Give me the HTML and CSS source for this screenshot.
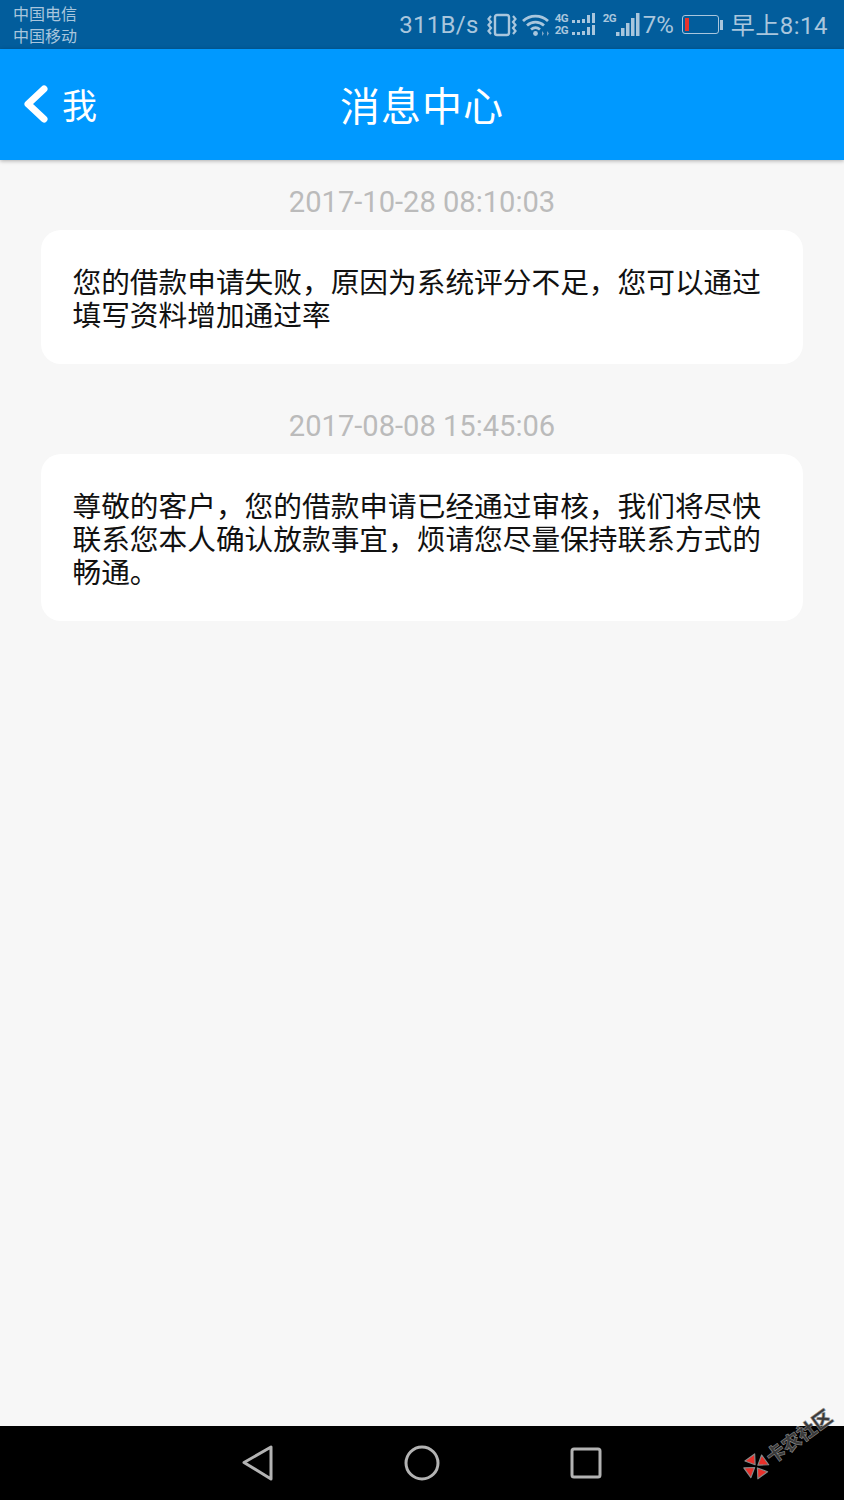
FILE: index.html
```html
<!DOCTYPE html>
<html lang="zh-CN">
<head>
  <meta charset="UTF-8" />
  <meta name="viewport" content="width=device-width, initial-scale=1.0"/>
  <title>消息中心</title>
  <link rel="stylesheet" href="styles.css">
</head>
<body>
  <div class="page">
    <div class="status-bar">
      <div class="carriers">
        <span>中国电信</span>
        <span>中国移动</span>
      </div>
      <div class="status-right">
        <span class="speed">311B/s</span>
        <svg class="ic-vibrate" width="30" height="24" viewBox="0 0 30 24" fill="none" stroke="#a9c6dd" stroke-width="2.200">
          <rect x="8" y="2" width="14" height="20" rx="2" stroke-width="2.400"/>
          <path d="M4 3L1.500 6 4 9l-2.500 3L4 15l-2.500 3L4 21M26 3l2.500 3L26 9l2.500 3-2.500 3 2.500 3-2.500 3"/>
        </svg>
        <svg class="ic-wifi" width="28" height="24" viewBox="0 0 28 24" fill="none" stroke="#a9c6dd" stroke-width="2.800">
          <path d="M1 8c7-6.500 18-6.500 25 0M5 12.500c5-4.500 12-4.500 17 0M9 16.500c3-2.500 6-2.500 9 0"/>
          <circle cx="13.500" cy="20.500" r="2.400" fill="#a9c6dd" stroke="none"/>
          <path d="M20 23v-5l2 2.500zM25 18v5l2-2.500z" fill="#7fa6c6" stroke="none"/>
        </svg>
        <div class="ic-dual">
          <div class="sim-row">
            <span class="sim-label">4G</span>
            <svg width="24" height="11" viewBox="0 0 24 11" fill="#a9c6dd"><rect x="0" y="7" width="3" height="3"/><rect x="5" y="7" width="3" height="3"/><rect x="10" y="6" width="3" height="4"/><rect x="15" y="2" width="3" height="8"/><rect x="20" y="0" width="3" height="10"/></svg>
          </div>
          <div class="sim-row">
            <span class="sim-label">2G</span>
            <svg width="24" height="11" viewBox="0 0 24 11" fill="#a9c6dd"><rect x="0" y="7" width="3" height="3"/><rect x="5" y="7" width="3" height="3"/><rect x="10" y="6" width="3" height="4"/><rect x="15" y="2" width="3" height="8"/><rect x="20" y="0" width="3" height="10"/></svg>
          </div>
        </div>
        <div class="ic-single">
          <span class="sim-label sim-top">2G</span>
          <svg width="24" height="24" viewBox="0 0 24 24" fill="#a9c6dd"><rect x="0" y="19" width="3.500" height="4"/><rect x="5" y="15" width="3.500" height="8"/><rect x="10" y="10" width="3.500" height="13"/><rect x="15" y="5" width="3.500" height="18"/><rect x="20" y="0" width="3.500" height="23"/></svg>
        </div>
        <span class="battery-pct">7%</span>
        <div class="battery">
          <div class="battery-body"><div class="battery-level"></div></div>
          <div class="battery-cap"></div>
        </div>
        <span class="clock">早上8:14</span>
      </div>
    </div>

    <header class="app-bar">
      <div class="back">
        <svg width="26" height="38" viewBox="0 0 26 38" fill="none" stroke="#fff" stroke-width="7" stroke-linecap="round" stroke-linejoin="round">
          <path d="M21 4L5 19l16 15"/>
        </svg>
        <span>我</span>
      </div>
      <h1 class="title">消息中心</h1>
    </header>

    <main class="messages">
      <section class="message">
        <div class="time">2017-10-28 08:10:03</div>
        <div class="card">您的借款申请失败，原因为系统评分不足，您可以通过填写资料增加通过率</div>
      </section>
      <section class="message">
        <div class="time">2017-08-08 15:45:06</div>
        <div class="card">尊敬的客户，您的借款申请已经通过审核，我们将尽快联系您本人确认放款事宜，烦请您尽量保持联系方式的畅通。</div>
      </section>
    </main>

    <nav class="nav-bar">
      <svg width="32" height="36" viewBox="0 0 32 36" fill="none" stroke="#b3b3b3" stroke-width="3" stroke-linejoin="round">
        <path d="M2 17.500L29 2v32z"/>
      </svg>
      <svg width="36" height="36" viewBox="0 0 36 36" fill="none" stroke="#b3b3b3" stroke-width="3">
        <circle cx="18" cy="18" r="16"/>
      </svg>
      <svg width="32" height="32" viewBox="0 0 32 32" fill="none" stroke="#b3b3b3" stroke-width="3">
        <rect x="2" y="2" width="28" height="28" rx="2"/>
      </svg>
    </nav>

    <div class="watermark">
      <svg width="28" height="28" viewBox="0 0 28 28">
        <g stroke="#888" stroke-width="1.200" fill="#e8302a" stroke-linejoin="round">
          <path d="M14 12L8 3h12z"/>
          <path d="M16 14l9-6v12z"/>
          <path d="M14 16l6 9H8z"/>
          <path d="M12 14l-9 6V8z"/>
        </g>
      </svg>
      <span>卡农社区</span>
    </div>
  </div>
</body>
</html>
```

FILE: styles.css
```css
* {
  box-sizing: border-box;
}

body {
  margin: 0;
  background-color: #f7f7f7;
  font-family: "Noto Sans CJK SC", "Noto Sans", sans-serif;
}

.page {
  position: relative;
  height: 1500px;
  display: flex;
  flex-direction: column;
  overflow: hidden;
}

.status-bar {
  height: 49px;
  flex-shrink: 0;
  padding: 0 16px 0 13px;
  display: flex;
  justify-content: space-between;
  align-items: center;
  background-color: #025d9c;
  color: #a9c6dd;
}

.carriers {
  display: flex;
  flex-direction: column;
  margin-top: -2px;
  font-size: 16px;
  line-height: 22px;
}

.status-right {
  display: flex;
  align-items: center;
  font-family: Roboto, "Noto Sans CJK SC", sans-serif;
}

.speed {
  font-size: 24px;
  letter-spacing: 0.3px;
  margin-right: 8px;
}

.ic-vibrate {
  margin-right: 5px;
}

.ic-wifi {
  margin-right: 5px;
}

.ic-dual {
  display: flex;
  flex-direction: column;
  gap: 1px;
  margin-right: 7px;
}

.sim-row {
  display: flex;
  align-items: center;
  gap: 4px;
  height: 11px;
}

.sim-label {
  font-size: 11.5px;
  line-height: 11px;
  font-weight: 700;
  letter-spacing: -0.5px;
  width: 13px;
}

.ic-single {
  display: flex;
  align-items: flex-end;
  height: 24px;
  margin-right: 3px;
}

.sim-top {
  align-self: flex-start;
}

.battery-pct {
  font-size: 24px;
  margin-right: 8px;
}

.battery {
  display: flex;
  align-items: center;
  margin-right: 8px;
}

.battery-body {
  width: 37px;
  height: 19px;
  padding: 2px;
  border: 1.5px solid #a9c6dd;
  border-radius: 3px;
}

.battery-level {
  width: 4px;
  height: 100%;
  background-color: #e8342c;
}

.battery-cap {
  width: 3px;
  height: 10px;
  margin-left: 1px;
  background-color: #a9c6dd;
}

.clock {
  margin-top: -2px;
  font-size: 24px;
  letter-spacing: 0.5px;
}

.app-bar {
  position: relative;
  height: 111px;
  flex-shrink: 0;
  display: flex;
  justify-content: center;
  align-items: center;
  background-color: #0099ff;
  color: #fff;
  box-shadow: 0 1px 4px rgba(0, 0, 0, 0.3);
}

.back {
  position: absolute;
  left: 23px;
  top: 36px;
  display: flex;
  align-items: center;
  gap: 13px;
  font-size: 35px;
  line-height: 38px;
}

.title {
  margin: -2px 0 0;
  font-size: 40px;
  font-weight: 400;
  line-height: 48px;
  letter-spacing: 1px;
}

.messages {
  flex: 1;
  padding: 23px 41px 0;
  display: flex;
  flex-direction: column;
  gap: 43px;
}

.time {
  height: 38px;
  margin-bottom: 9px;
  text-align: center;
  font-family: Roboto, sans-serif;
  font-size: 29.1px;
  line-height: 38px;
  color: #bbbbbb;
}

.card {
  padding: 34px 31.5px;
  background-color: #fff;
  border-radius: 20px;
  font-size: 28.7px;
  line-height: 33px;
  color: #111;
}

.nav-bar {
  height: 74px;
  flex-shrink: 0;
  padding: 0 242px;
  display: flex;
  justify-content: space-between;
  align-items: center;
  background-color: #000;
}

.watermark {
  position: absolute;
  left: 735px;
  top: 1429px;
  display: flex;
  align-items: center;
  white-space: nowrap;
  font-size: 19px;
  line-height: 30px;
  font-weight: 900;
  color: #3a3a3a;
  transform: rotate(-36deg);
  -webkit-text-stroke: 0.5px #999;
}
```
